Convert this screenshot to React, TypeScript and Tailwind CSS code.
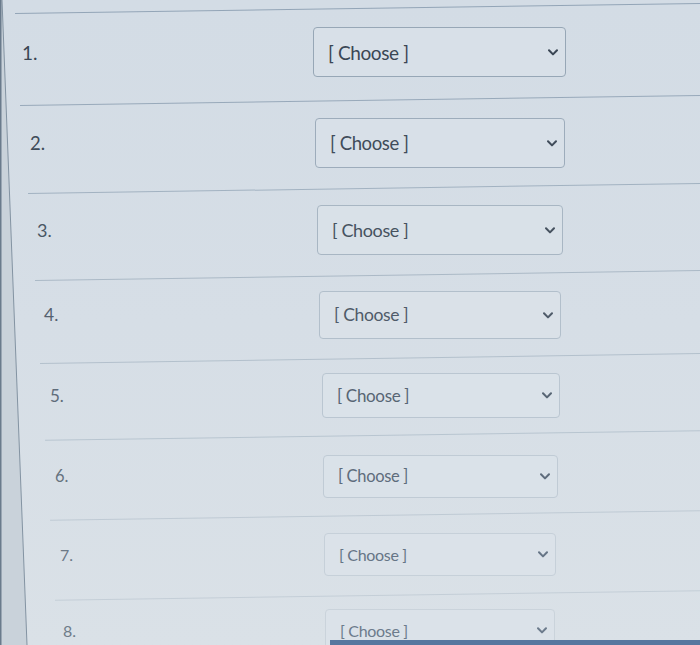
import React from "react";

type Row = {
  n: string;
  line: string;
  row: string;
  num: string;
  box: string;
  text: string;
  chev: string;
};

// Question rows of a matching quiz; each row sits a little further in and smaller.
const rows: Row[] = [
  {
    n: "1.",
    line: "ml-[15px] bg-[#93a5b7]",
    row: "h-[91px] pt-[18px] pl-[22px]",
    num: "w-[291px] text-[19px] text-[#3a4654]",
    box: "w-[253px] h-[50px] border-[#97a7b6] bg-[#d8e0e8]",
    text: "text-[19px] text-[#3a4654]",
    chev: "text-[#3a4654]",
  },
  {
    n: "2.",
    line: "ml-[20px] bg-[#98a9ba]",
    row: "h-[87px] pt-[17px] pl-[30px]",
    num: "w-[285px] text-[18.5px] text-[#404c5a]",
    box: "w-[250px] h-[50px] border-[#9dacbb] bg-[#d8e0e8]",
    text: "text-[18.5px] text-[#404c5a]",
    chev: "text-[#404c5a]",
  },
  {
    n: "3.",
    line: "ml-[28px] bg-[#a2b2c1]",
    row: "h-[86px] pt-[16px] pl-[37px]",
    num: "w-[280px] text-[18px] text-[#4a5664]",
    box: "w-[246px] h-[50px] border-[#a8b6c3] bg-[#d9e1e8]",
    text: "text-[18px] text-[#46525f]",
    chev: "text-[#46525f]",
  },
  {
    n: "4.",
    line: "ml-[35px] bg-[#abb9c6]",
    row: "h-[82px] pt-[15px] pl-[44px]",
    num: "w-[275px] text-[17.5px] text-[#55616f]",
    box: "w-[242px] h-[48px] border-[#b2bfcb] bg-[#dae1e8]",
    text: "text-[17.5px] text-[#4f5b69]",
    chev: "text-[#4f5b69]",
  },
  {
    n: "5.",
    line: "ml-[40px] bg-[#b3c0cc]",
    row: "h-[76px] pt-[14px] pl-[50px]",
    num: "w-[272px] text-[17px] text-[#5f6c7a]",
    box: "w-[238px] h-[45px] border-[#bac6d1] bg-[#dae2e9]",
    text: "text-[17px] text-[#576574]",
    chev: "text-[#576574]",
  },
  {
    n: "6.",
    line: "ml-[45px] bg-[#b8c5d0]",
    row: "h-[79px] pt-[19px] pl-[55px]",
    num: "w-[268px] text-[16.5px] text-[#66737f]",
    box: "w-[235px] h-[43px] border-[#c0cbd5] bg-[#dae2e9]",
    text: "text-[16.5px] text-[#5e6c7c]",
    chev: "text-[#5e6c7c]",
  },
  {
    n: "7.",
    line: "ml-[50px] bg-[#bfcad4]",
    row: "h-[79px] pt-[17px] pl-[60px]",
    num: "w-[264px] text-[16px] text-[#6c7986]",
    box: "w-[232px] h-[43px] border-[#c6d0d9] bg-[#dbe2e9]",
    text: "text-[16px] text-[#667586]",
    chev: "text-[#667586]",
  },
  {
    n: "8.",
    line: "ml-[55px] bg-[#c4ced7]",
    row: "h-[60px] pt-[13px] pl-[63px]",
    num: "w-[262px] text-[16px] text-[#6f7c89]",
    box: "w-[230px] h-[43px] border-[#cad3db] bg-[#dbe2e9]",
    text: "text-[16px] text-[#6c7b8c]",
    chev: "text-[#6c7b8c]",
  },
];

function Chevron({ className }: { className: string }) {
  return (
    <svg
      viewBox="0 0 10 7"
      className={`w-[10px] h-[7px] ${className}`}
      fill="none"
      stroke="currentColor"
      strokeWidth={2}
      strokeLinecap="round"
      strokeLinejoin="round"
    >
      <path d="M1 1.2 L5 5.4 L9 1.2" />
    </svg>
  );
}

export default function App() {
  return (
    <div
      className="relative w-[700px] h-[645px] overflow-hidden bg-gradient-to-b from-[#d3dce5] via-[#d6dee6] to-[#dae1e7]"
      style={{ fontFamily: "Lato, 'Open Sans', sans-serif" }}
    >
      <div className="pt-[8px]">
        {rows.map((r) => (
          <div key={r.n}>
            <div className={`h-px -rotate-[0.85deg] ${r.line}`} />
            <div className={r.row}>
              <div className="flex items-center">
                <span className={`leading-none ${r.num}`}>{r.n}</span>
                <div
                  className={`flex items-center justify-between border rounded-[4px] pl-[14px] pr-[7px] ${r.box}`}
                >
                  <span className={`leading-none tracking-[-0.02em] ${r.text}`}>
                    [ Choose ]
                  </span>
                  <Chevron className={r.chev} />
                </div>
              </div>
            </div>
          </div>
        ))}
      </div>

      {/* left frame edge of the page panel */}
      <svg
        className="absolute inset-0 pointer-events-none"
        width="700"
        height="645"
        viewBox="0 0 700 645"
      >
        <polygon points="0,0 2,0 27,645 0,645" fill="#c9d2da" />
        <line x1="2" y1="0" x2="27" y2="645" stroke="#8393a2" strokeWidth="1" />
        <rect x="0" y="0" width="1.5" height="645" fill="#6a7b8c" />
      </svg>

      {/* bottom toolbar strip */}
      <div className="absolute left-[330px] right-0 bottom-0 h-[5px] bg-[#56779f]" />
    </div>
  );
}
